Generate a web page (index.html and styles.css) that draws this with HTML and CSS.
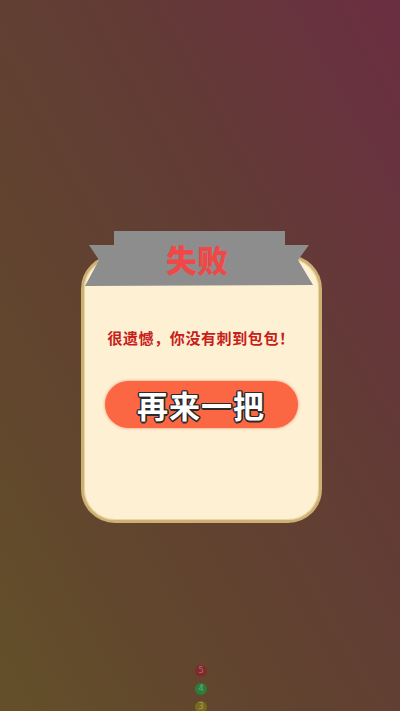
FILE: index.html
```html
<!DOCTYPE html>
<html lang="zh-CN">
<head>
<meta charset="utf-8">
<link rel="stylesheet" href="styles.css">
</head>
<body>
<div class="screen">
  <div class="dialog">
    <div class="card">
      <p class="msg">很遗憾，你没有刺到包包！</p>
      <button class="again">再来一把</button>
    </div>
    <div class="ribbon">
      <svg class="ribbon-bg" viewBox="0 0 230 60" width="230" height="60">
        <polygon points="30,2 201,2 201,16 225,16 214,31 229,56 1,57 15,31 5,16 30,16" fill="#8d8d8d"/>
      </svg>
      <h1 class="title">失败</h1>
    </div>
  </div>
  <div class="dots">
    <span class="dot red">5</span>
    <span class="dot green">4</span>
    <span class="dot yellow">3</span>
  </div>
</div>
</body>
</html>
```
FILE: styles.css
```css
* { box-sizing: border-box; }
html, body { margin: 0; padding: 0; }
body {
  width: 400px;
  height: 711px;
  overflow: hidden;
  font-family: "Noto Sans CJK SC", "Noto Sans", sans-serif;
}
.screen {
  width: 400px;
  height: 711px;
  display: flex;
  flex-direction: column;
  align-items: center;
  background: linear-gradient(to top right, #635029 0%, #61432f 35%, #623c35 62%, #6b2e42 100%);
}
.dialog {
  position: relative;
  width: 241px;
  margin-top: 255px;
  margin-left: 2px;
}
.card {
  height: 268px;
  background: #fdf0d3;
  border: 3px solid #cdb073;
  box-shadow: inset 0 0 0 1px #e9d59e;
  border-radius: 34px;
  display: flex;
  flex-direction: column;
  align-items: center;
  padding-top: 70px;
}
.msg {
  margin: 0;
  height: 20px;
  line-height: 20px;
  font-size: 15px;
  font-weight: 700;
  color: #c72019;
  letter-spacing: 0.6px;
}
.again {
  margin-top: 33px;
  width: 193px;
  height: 47px;
  border: none;
  border-radius: 24px;
  background: #fb6643;
  box-shadow: 0 0 3px rgba(240, 90, 60, 0.7);
  color: #fff;
  font-family: "Noto Sans CJK SC", sans-serif;
  font-size: 31px;
  font-weight: 700;
  line-height: 47px;
  padding: 0;
  letter-spacing: 1px;
  text-shadow:
    1.5px 0 0 #2a2a2a, -1.5px 0 0 #2a2a2a, 0 1.5px 0 #2a2a2a, 0 -1.5px 0 #2a2a2a,
    1px 1px 0 #2a2a2a, -1px -1px 0 #2a2a2a, 1px -1px 0 #2a2a2a, -1px 1px 0 #2a2a2a;
}
.ribbon {
  position: absolute;
  left: 3px;
  top: -26px;
  width: 230px;
  height: 60px;
  display: flex;
  align-items: center;
  justify-content: center;
}
.ribbon-bg {
  position: absolute;
  left: 0;
  top: 0;
}
.title {
  position: relative;
  margin: 0 0 0 -3px;
  font-size: 31px;
  font-weight: 900;
  color: #f04747;
  line-height: 40px;
  letter-spacing: 0;
}
.dots {
  margin-top: auto;
  display: flex;
  flex-direction: column;
  align-items: center;
  gap: 6px;
  height: 52px;
  margin-bottom: -6px;
  margin-left: 2px;
}
.dot {
  width: 12px;
  height: 12px;
  border-radius: 50%;
  font-family: "DejaVu Sans", sans-serif;
  font-size: 8px;
  line-height: 12px;
  text-align: center;
  color: rgba(255,255,255,0.35);
}
.red { background: #7f2a2d; }
.green { background: #2a7d3c; }
.yellow { background: #7a6a1c; }
```
